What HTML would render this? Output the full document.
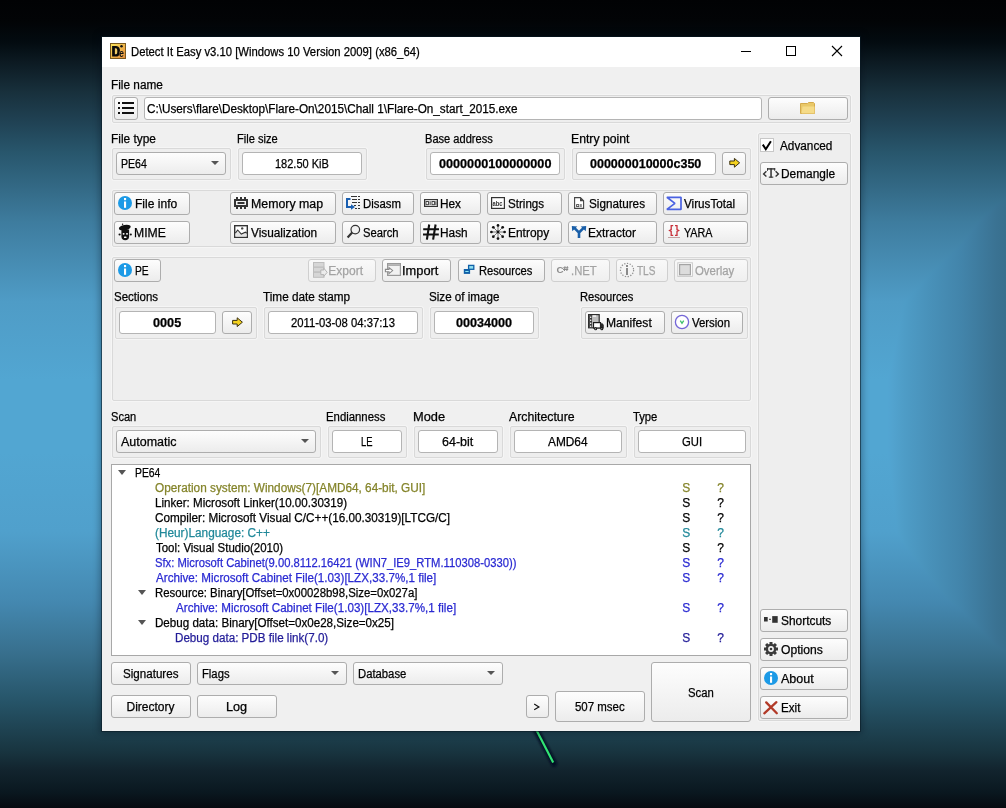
<!DOCTYPE html>
<html><head><meta charset="utf-8"><style>
*{margin:0;padding:0}
html,body{width:1006px;height:808px;overflow:hidden}
body{position:relative;font-family:"Liberation Sans",sans-serif;font-size:12px;color:#000;
background:linear-gradient(to bottom,#010204 0px,#020406 22px,#030b10 42px,#0c1a22 62px,#18303c 92px,#204254 122px,#28566c 152px,#3e7c9e 222px,#4f9cc6 302px,#52a6d2 380px,#52a6d2 452px,#50a0cc 532px,#4488b0 602px,#38708e 652px,#265468 702px,#18343f 752px,#12242e 770px,#0a1820 792px,#060a10 808px)}
.abs{position:absolute}
.t{position:absolute;white-space:pre;line-height:15px;transform-origin:0 0;-webkit-text-stroke:0.25px currentColor}
.win{position:absolute;left:102px;top:37px;width:758px;height:694px;background:#f0f0f0;box-shadow:0 0 0 1px rgba(10,25,35,0.55),0 0 7px 2px rgba(0,10,20,0.35)}
.title{position:absolute;left:102px;top:37px;width:758px;height:30px;background:#fff}
.fr{position:absolute;border:1px solid #d9d9d9;border-radius:2px;background:#eeeeee;box-shadow:0 0 0 1px #f5f5f5}
.b{position:absolute;border:1px solid #adadad;border-radius:3px;background:linear-gradient(#fdfdfd,#ececec);overflow:hidden}
.b.dis{border-color:#cfcfcf;background:linear-gradient(#f9f9f9,#efefef)}
.bt{position:absolute;white-space:pre}
.in{position:absolute;border:1px solid #b4b4b4;border-radius:3px;background:#fff}
.arr{position:absolute;width:0;height:0;border-left:4px solid transparent;border-right:4px solid transparent;border-top:4px solid #555}
.tarr{position:absolute;width:0;height:0;border-left:4px solid transparent;border-right:4px solid transparent;border-top:5px solid #555}
.ic{position:absolute}
</style></head>
<body>
<div class="abs" style="left:860px;top:0;width:146px;height:808px;mix-blend-mode:darken;background:linear-gradient(to right,#ffffff 0px,#56aad8 20px,#4e9cc6 45px,#4890b8 72px,#4284aa 102px,#3a7292 137px,#38708e 146px)"></div>
<svg class="abs" style="left:515px;top:715px" width="60" height="70" viewBox="0 0 60 70"><defs><filter id="gb" x="-50%" y="-50%" width="200%" height="200%"><feGaussianBlur stdDeviation="0.8"/></filter></defs><path d="M20.6 14L39 48.5" stroke="#050c24" stroke-width="6" stroke-linecap="round" filter="url(#gb)" opacity="0.9"/><path d="M21.4 15L38.2 47.5" stroke="#32e474" stroke-width="2.2"/></svg>
<div class="win"></div><div class="title"></div><div class="t" style="left:130.75px;top:45.30px;color:#000;transform:scaleX(0.9409);">Detect It Easy v3.10 [Windows 10 Version 2009] (x86_64)</div><div class="t" style="left:110.61px;top:78.30px;color:#000;transform:scaleX(0.9841);">File name</div><div class="fr" style="left:112px;top:95px;width:737px;height:26px"></div><div class="b" style="left:114px;top:97px;width:22px;height:21px;"></div><div class="in" style="left:144px;top:97px;width:616px;height:21px;"></div><div class="t" style="left:147.16px;top:102.30px;color:#000;transform:scaleX(0.9779);">C:\Users\flare\Desktop\Flare-On\2015\Chall 1\Flare-On_start_2015.exe</div><div class="b" style="left:768px;top:97px;width:78px;height:21px;"></div><div class="t" style="left:110.71px;top:132.30px;color:#000;transform:scaleX(0.9891);">File type</div><div class="fr" style="left:112px;top:148px;width:117px;height:30px"></div><div class="b" style="left:116px;top:152px;width:108px;height:21px;"><div class="arr" style="left:94px;top:8px"></div></div><div class="t" style="left:120.61px;top:157.30px;color:#000;transform:scaleX(0.8800);">PE64</div><div class="t" style="left:236.87px;top:132.30px;color:#000;transform:scaleX(0.9241);">File size</div><div class="fr" style="left:238px;top:148px;width:127px;height:30px"></div><div class="in" style="left:242px;top:152px;width:118px;height:21px;"></div><div class="t" style="left:274.92px;top:157.30px;color:#000;transform:scaleX(0.9177);">182.50 KiB</div><div class="t" style="left:424.57px;top:132.30px;color:#000;transform:scaleX(0.9226);">Base address</div><div class="fr" style="left:426px;top:148px;width:137px;height:30px"></div><div class="in" style="left:430px;top:152px;width:128px;height:21px;"></div><div class="t" style="left:438.83px;top:157.30px;color:#000;font-weight:bold;transform:scaleX(1.0528);">0000000100000000</div><div class="t" style="left:570.58px;top:132.30px;color:#000;transform:scaleX(1.0190);">Entry point</div><div class="fr" style="left:572px;top:148px;width:177px;height:30px"></div><div class="in" style="left:576px;top:152px;width:138px;height:21px;"></div><div class="t" style="left:590.38px;top:157.30px;color:#000;font-weight:bold;transform:scaleX(1.0424);">000000010000c350</div><div class="b" style="left:722px;top:152px;width:22px;height:21px;"></div><div class="fr" style="left:758px;top:133px;width:91px;height:586px"></div><div class="abs" style="left:760px;top:138px;width:12px;height:12px;border:1px solid #c8c8c8;background:#fff"></div><div class="t" style="left:779.80px;top:139.30px;color:#000;transform:scaleX(0.9810);">Advanced</div><div class="b" style="left:760px;top:162px;width:86px;height:21px;"></div><div class="t" style="left:781.31px;top:167.30px;color:#000;transform:scaleX(0.9902);">Demangle</div><div class="fr" style="left:112px;top:190px;width:637px;height:55px"></div><div class="b" style="left:114px;top:192px;width:74px;height:21px;"></div><div class="t" style="left:134.50px;top:197.30px;color:#000;transform:scaleX(1.0038);">File info</div><div class="b" style="left:230px;top:192px;width:104px;height:21px;"></div><div class="t" style="left:250.77px;top:197.30px;color:#000;transform:scaleX(1.0286);">Memory map</div><div class="b" style="left:342px;top:192px;width:70px;height:21px;"></div><div class="t" style="left:362.65px;top:197.30px;color:#000;transform:scaleX(0.9478);">Disasm</div><div class="b" style="left:420px;top:192px;width:59px;height:21px;"></div><div class="t" style="left:440.42px;top:197.30px;color:#000;transform:scaleX(0.9833);">Hex</div><div class="b" style="left:487px;top:192px;width:73px;height:21px;"></div><div class="t" style="left:507.92px;top:197.30px;color:#000;transform:scaleX(0.9658);">Strings</div><div class="b" style="left:568px;top:192px;width:87px;height:21px;"></div><div class="t" style="left:588.51px;top:197.30px;color:#000;transform:scaleX(0.9758);">Signatures</div><div class="b" style="left:663px;top:192px;width:83px;height:21px;"></div><div class="t" style="left:684.40px;top:197.30px;color:#000;transform:scaleX(0.9748);">VirusTotal</div><div class="b" style="left:114px;top:221px;width:74px;height:21px;"></div><div class="t" style="left:134.49px;top:226.30px;color:#000;transform:scaleX(1.0158);">MIME</div><div class="b" style="left:230px;top:221px;width:104px;height:21px;"></div><div class="t" style="left:251.00px;top:226.30px;color:#000;transform:scaleX(0.9852);">Visualization</div><div class="b" style="left:342px;top:221px;width:70px;height:21px;"></div><div class="t" style="left:363.03px;top:226.30px;color:#000;transform:scaleX(0.9334);">Search</div><div class="b" style="left:420px;top:221px;width:59px;height:21px;"></div><div class="t" style="left:440.41px;top:226.30px;color:#000;transform:scaleX(0.9871);">Hash</div><div class="b" style="left:487px;top:221px;width:73px;height:21px;"></div><div class="t" style="left:507.50px;top:226.30px;color:#000;transform:scaleX(0.9962);">Entropy</div><div class="b" style="left:568px;top:221px;width:87px;height:21px;"></div><div class="t" style="left:588.10px;top:226.30px;color:#000;transform:scaleX(0.9975);">Extractor</div><div class="b" style="left:663px;top:221px;width:83px;height:21px;"></div><div class="t" style="left:684.22px;top:226.30px;color:#000;transform:scaleX(0.8960);">YARA</div><div class="fr" style="left:112px;top:257px;width:637px;height:142px"></div><div class="b" style="left:114px;top:259px;width:45px;height:21px;"></div><div class="t" style="left:134.63px;top:264.30px;color:#000;transform:scaleX(0.8559);">PE</div><div class="b dis" style="left:308px;top:259px;width:66px;height:21px;"></div><div class="t" style="left:328.30px;top:264.30px;color:#a3a3a3;">Export</div><div class="b" style="left:382px;top:259px;width:67px;height:21px;"></div><div class="t" style="left:402.12px;top:264.30px;color:#000;transform:scaleX(1.0708);">Import</div><div class="b" style="left:458px;top:259px;width:85px;height:21px;"></div><div class="t" style="left:478.56px;top:264.30px;color:#000;transform:scaleX(0.9312);">Resources</div><div class="b dis" style="left:551px;top:259px;width:57px;height:21px;"></div><div class="t" style="left:570.86px;top:264.30px;color:#a3a3a3;transform:scaleX(0.9386);">.NET</div><div class="b dis" style="left:616px;top:259px;width:50px;height:21px;"></div><div class="t" style="left:637.33px;top:264.30px;color:#a3a3a3;transform:scaleX(0.8355);">TLS</div><div class="b dis" style="left:674px;top:259px;width:72px;height:21px;"></div><div class="t" style="left:695.23px;top:264.30px;color:#a3a3a3;transform:scaleX(0.9500);">Overlay</div><div class="t" style="left:114.02px;top:290.30px;color:#000;transform:scaleX(0.9573);">Sections</div><div class="fr" style="left:115px;top:307px;width:140px;height:30px"></div><div class="in" style="left:119px;top:311px;width:95px;height:21px;"></div><div class="t" style="left:153.33px;top:316.30px;color:#000;font-weight:bold;transform:scaleX(1.0568);">0005</div><div class="b" style="left:222px;top:311px;width:28px;height:21px;"></div><div class="t" style="left:263.40px;top:290.30px;color:#000;transform:scaleX(0.9802);">Time date stamp</div><div class="fr" style="left:264px;top:307px;width:157px;height:30px"></div><div class="in" style="left:268px;top:311px;width:148px;height:21px;"></div><div class="t" style="left:290.99px;top:316.30px;color:#000;transform:scaleX(0.9400);">2011-03-08 04:37:13</div><div class="t" style="left:428.82px;top:290.30px;color:#000;transform:scaleX(0.9689);">Size of image</div><div class="fr" style="left:430px;top:307px;width:107px;height:30px"></div><div class="in" style="left:434px;top:311px;width:98px;height:21px;"></div><div class="t" style="left:455.98px;top:316.30px;color:#000;font-weight:bold;transform:scaleX(1.0511);">00034000</div><div class="t" style="left:579.96px;top:290.30px;color:#000;transform:scaleX(0.9312);">Resources</div><div class="fr" style="left:581px;top:307px;width:165px;height:30px"></div><div class="b" style="left:585px;top:311px;width:78px;height:21px;"></div><div class="t" style="left:606.09px;top:316.30px;color:#000;transform:scaleX(1.0086);">Manifest</div><div class="b" style="left:671px;top:311px;width:70px;height:21px;"></div><div class="t" style="left:692.10px;top:316.30px;color:#000;transform:scaleX(0.9503);">Version</div><div class="t" style="left:111.14px;top:410.30px;color:#000;transform:scaleX(0.9242);">Scan</div><div class="fr" style="left:112px;top:426px;width:207px;height:30px"></div><div class="b" style="left:116px;top:430px;width:198px;height:21px;"><div class="arr" style="left:184px;top:8px"></div></div><div class="t" style="left:121.40px;top:435.30px;color:#000;transform:scaleX(1.0404);">Automatic</div><div class="t" style="left:326.35px;top:410.30px;color:#000;transform:scaleX(0.9461);">Endianness</div><div class="fr" style="left:328px;top:426px;width:77px;height:30px"></div><div class="in" style="left:332px;top:430px;width:68px;height:21px;"></div><div class="t" style="left:361.09px;top:435.30px;color:#000;transform:scaleX(0.7835);">LE</div><div class="t" style="left:412.74px;top:410.30px;color:#000;transform:scaleX(1.0683);">Mode</div><div class="fr" style="left:414px;top:426px;width:87px;height:30px"></div><div class="in" style="left:418px;top:430px;width:78px;height:21px;"></div><div class="t" style="left:442.08px;top:435.30px;color:#000;transform:scaleX(1.0414);">64-bit</div><div class="t" style="left:509.40px;top:410.30px;color:#000;transform:scaleX(1.0244);">Architecture</div><div class="fr" style="left:510px;top:426px;width:115px;height:30px"></div><div class="in" style="left:514px;top:430px;width:106px;height:21px;"></div><div class="t" style="left:548.35px;top:435.30px;color:#000;transform:scaleX(0.9889);">AMD64</div><div class="t" style="left:633.41px;top:410.30px;color:#000;transform:scaleX(0.9352);">Type</div><div class="fr" style="left:634px;top:426px;width:115px;height:30px"></div><div class="in" style="left:638px;top:430px;width:106px;height:21px;"></div><div class="t" style="left:682.19px;top:435.30px;color:#000;transform:scaleX(0.9391);">GUI</div><div class="abs" style="left:111px;top:464px;width:638px;height:190px;border:1px solid #a8a8a8;background:#fff"></div><div class="t" style="left:134.62px;top:466.30px;color:#000;transform:scaleX(0.8623);">PE64</div><div class="tarr" style="left:118px;top:470px"></div><div class="t" style="left:155.21px;top:481.30px;color:#84842a;transform:scaleX(0.9814);">Operation system: Windows(7)[AMD64, 64-bit, GUI]</div><div class="t" style="left:682.30px;top:481.30px;color:#84842a;">S</div><div class="t" style="left:717.20px;top:481.30px;color:#84842a;">?</div><div class="t" style="left:154.83px;top:496.30px;color:#000;transform:scaleX(0.9662);">Linker: Microsoft Linker(10.00.30319)</div><div class="t" style="left:682.30px;top:496.30px;color:#000;">S</div><div class="t" style="left:717.20px;top:496.30px;color:#000;">?</div><div class="t" style="left:155.11px;top:511.30px;color:#000;transform:scaleX(0.9779);">Compiler: Microsoft Visual C/C++(16.00.30319)[LTCG/C]</div><div class="t" style="left:682.30px;top:511.30px;color:#000;">S</div><div class="t" style="left:717.20px;top:511.30px;color:#000;">?</div><div class="t" style="left:155.01px;top:526.30px;color:#21899a;transform:scaleX(0.9841);">(Heur)Language: C++</div><div class="t" style="left:682.30px;top:526.30px;color:#21899a;">S</div><div class="t" style="left:717.20px;top:526.30px;color:#21899a;">?</div><div class="t" style="left:155.51px;top:541.30px;color:#000;transform:scaleX(0.9547);">Tool: Visual Studio(2010)</div><div class="t" style="left:682.30px;top:541.30px;color:#000;">S</div><div class="t" style="left:717.20px;top:541.30px;color:#000;">?</div><div class="t" style="left:155.23px;top:556.30px;color:#2a2ad2;transform:scaleX(0.9358);">Sfx: Microsoft Cabinet(9.00.8112.16421 (WIN7_IE9_RTM.110308-0330))</div><div class="t" style="left:682.30px;top:556.30px;color:#2a2ad2;">S</div><div class="t" style="left:717.20px;top:556.30px;color:#2a2ad2;">?</div><div class="t" style="left:155.70px;top:571.30px;color:#2a2ad2;transform:scaleX(0.9707);">Archive: Microsoft Cabinet File(1.03)[LZX,33.7%,1 file]</div><div class="t" style="left:682.30px;top:571.30px;color:#2a2ad2;">S</div><div class="t" style="left:717.20px;top:571.30px;color:#2a2ad2;">?</div><div class="t" style="left:154.85px;top:586.30px;color:#000;transform:scaleX(0.9487);">Resource: Binary[Offset=0x00028b98,Size=0x027a]</div><div class="tarr" style="left:138px;top:590px"></div><div class="t" style="left:175.50px;top:601.30px;color:#2a2ad2;transform:scaleX(0.9700);">Archive: Microsoft Cabinet File(1.03)[LZX,33.7%,1 file]</div><div class="t" style="left:682.30px;top:601.30px;color:#2a2ad2;">S</div><div class="t" style="left:717.20px;top:601.30px;color:#2a2ad2;">?</div><div class="t" style="left:154.83px;top:616.30px;color:#000;transform:scaleX(0.9664);">Debug data: Binary[Offset=0x0e28,Size=0x25]</div><div class="tarr" style="left:138px;top:620px"></div><div class="t" style="left:174.63px;top:631.30px;color:#221c98;transform:scaleX(0.9694);">Debug data: PDB file link(7.0)</div><div class="t" style="left:682.30px;top:631.30px;color:#221c98;">S</div><div class="t" style="left:717.20px;top:631.30px;color:#221c98;">?</div><div class="b" style="left:111px;top:662px;width:78px;height:21px;"></div><div class="t" style="left:123.02px;top:667.30px;color:#000;transform:scaleX(0.9669);">Signatures</div><div class="b" style="left:197px;top:662px;width:148px;height:21px;"><div class="arr" style="left:133px;top:8px"></div></div><div class="t" style="left:201.66px;top:667.30px;color:#000;transform:scaleX(0.9378);">Flags</div><div class="b" style="left:353px;top:662px;width:148px;height:21px;"><div class="arr" style="left:133px;top:8px"></div></div><div class="t" style="left:357.85px;top:667.30px;color:#000;transform:scaleX(0.9401);">Database</div><div class="b" style="left:111px;top:695px;width:78px;height:21px;"></div><div class="t" style="left:126.50px;top:700.30px;color:#000;">Directory</div><div class="b" style="left:197px;top:695px;width:78px;height:21px;"></div><div class="t" style="left:226.35px;top:700.30px;color:#000;transform:scaleX(1.0574);">Log</div><div class="b" style="left:526px;top:695px;width:21px;height:21px;"></div><div class="b" style="left:555px;top:691px;width:88px;height:29px;"></div><div class="t" style="left:575.02px;top:700.30px;color:#000;transform:scaleX(0.9547);">507 msec</div><div class="b" style="left:651px;top:662px;width:98px;height:58px;"></div><div class="t" style="left:687.53px;top:686.30px;color:#000;transform:scaleX(0.9433);">Scan</div><div class="b" style="left:760px;top:609px;width:86px;height:21px;"></div><div class="t" style="left:780.90px;top:614.30px;color:#000;transform:scaleX(0.9922);">Shortcuts</div><div class="b" style="left:760px;top:638px;width:86px;height:21px;"></div><div class="t" style="left:781.19px;top:643.30px;color:#000;transform:scaleX(1.0110);">Options</div><div class="b" style="left:760px;top:667px;width:86px;height:21px;"></div><div class="t" style="left:781.40px;top:672.30px;color:#000;transform:scaleX(1.0439);">About</div><div class="b" style="left:760px;top:696px;width:86px;height:21px;"></div><div class="t" style="left:780.53px;top:701.30px;color:#000;transform:scaleX(0.9701);">Exit</div><svg class="abs" style="left:0;top:0" width="1006" height="808" viewBox="0 0 1006 808"><g transform="translate(110 43)"><defs><linearGradient id="ig" x1="0" y1="0" x2="1" y2="1"><stop offset="0" stop-color="#fbe65c"/><stop offset="1" stop-color="#e4883a"/></linearGradient></defs><rect x="0.5" y="0.5" width="15" height="15" fill="url(#ig)" stroke="#7a5a20"/><path d="M2.1 3H6.2C8.8 3 10 5.2 10 8.2S8.8 13.5 6.2 13.5H2.1Z" fill="#0a0a0a"/><path d="M4.9 5.3H5.9C6.9 5.3 7.3 6.5 7.3 8.2S6.9 11.2 5.9 11.2H4.9Z" fill="#f0cc66"/><circle cx="11.5" cy="3.3" r="1.25" fill="#111"/><text x="8.9" y="13.6" font-family="Liberation Sans" font-weight="bold" font-size="10" textLength="5" lengthAdjust="spacingAndGlyphs" fill="#111" stroke="#f2b860" stroke-width="0.6" paint-order="stroke">e</text></g><rect x="741" y="51" width="10" height="1" fill="#000"/><rect x="786.5" y="46.5" width="9" height="9" fill="none" stroke="#000" stroke-width="1"/><path d="M832 46L842 56M842 46L832 56" stroke="#000" stroke-width="1.1"/><g fill="#111"><rect x="118" y="102" width="2" height="2"/><rect x="118" y="107" width="2" height="2"/><rect x="118" y="112" width="2" height="2"/><rect x="122" y="102" width="12" height="2"/><rect x="122" y="107" width="12" height="2"/><rect x="122" y="112" width="12" height="2"/></g><path d="M800.5 103.5H807.5L808.5 102.5H813.5L814.5 103.5V113.5H800.5Z" fill="#e9c868" stroke="#d4aa4c" stroke-width="1"/><path d="M802.5 106.5H814.5V113.5H801.5Z" fill="#f5db88"/><path transform="translate(729.2 157.8)" d="M0.6 3.2H5.2V0.6L10.4 5 5.2 9.4V6.8H0.6Z" fill="#f4d21f" stroke="#3a3010" stroke-width="1" stroke-linejoin="round"/><path transform="translate(232 317.2)" d="M0.6 3.2H5.2V0.6L10.4 5 5.2 9.4V6.8H0.6Z" fill="#f4d21f" stroke="#3a3010" stroke-width="1" stroke-linejoin="round"/><polyline points="762.8,144.6 765.8,149.2 770.9,141.2" fill="none" stroke="#000" stroke-width="2"/><g fill="none" stroke="#333" stroke-width="1.4"><polyline points="766.4,171.3 763.6,174 766.4,176.6"/><polyline points="775.6,171.3 778.4,174 775.6,176.6"/></g><g fill="#333"><rect x="767" y="168.2" width="8.2" height="1.4"/><rect x="767" y="168.2" width="1" height="2.6"/><rect x="774.2" y="168.2" width="1" height="2.6"/><rect x="770.3" y="168.2" width="1.5" height="9.4"/><rect x="768.8" y="176.6" width="4.5" height="1.1"/></g><circle cx="125" cy="203" r="7" fill="#1c9ae6"/><rect x="124" y="198" width="2.1" height="2.2" fill="#fff"/><rect x="124" y="201.5" width="2.1" height="6.3" fill="#fff"/><circle cx="125" cy="270" r="7" fill="#1c9ae6"/><rect x="124" y="265" width="2.1" height="2.2" fill="#fff"/><rect x="124" y="268.5" width="2.1" height="6.3" fill="#fff"/><circle cx="771" cy="678" r="7" fill="#1c9ae6"/><rect x="770" y="673" width="2.1" height="2.2" fill="#fff"/><rect x="770" y="676.5" width="2.1" height="6.3" fill="#fff"/><g fill="#333"><rect x="235" y="200" width="12" height="6" fill="none" stroke="#333" stroke-width="2"/><rect x="237.5" y="202" width="7" height="2"/><rect x="236" y="197" width="2" height="2"/><rect x="240" y="197" width="2" height="2"/><rect x="244" y="197" width="2" height="2"/><rect x="236" y="207" width="2" height="2"/><rect x="240" y="207" width="2" height="2"/><rect x="244" y="207" width="2" height="2"/></g><rect x="234.7" y="225.7" width="12.6" height="11.6" fill="#fff" stroke="#333" stroke-width="1.4"/><path d="M235.5 233L237.7 230 241.3 234 245.4 232.2 246.6 233V236.6H235.5Z" fill="#e4e4e4"/><polyline points="235.3,233.2 237.7,230 241.3,234.1 245.4,232.2 246.8,233.2" fill="none" stroke="#333" stroke-width="1.1"/><circle cx="242.2" cy="228.4" r="1.2" fill="#444"/><path d="M350.5 199H347V207H352" fill="none" stroke="#1a5fb0" stroke-width="2"/><path d="M351 204.2L355 207 351 209.8Z" fill="#1a5fb0"/><g fill="#333"><rect x="351" y="196" width="6" height="1"/><rect x="358" y="196" width="2" height="1"/><rect x="352" y="199" width="5" height="1"/><rect x="358" y="199" width="2" height="1"/><rect x="352" y="202" width="5" height="1"/><rect x="358" y="202" width="2" height="1"/><rect x="354" y="205" width="2" height="1"/><rect x="358" y="205" width="2" height="1"/><rect x="355" y="208" width="2" height="1"/><rect x="358" y="208" width="2" height="1"/></g><circle cx="355.3" cy="229.6" r="4.3" fill="#f2f2f2" stroke="#333" stroke-width="1.2"/><path d="M352.2 232.6L347.6 237.4" stroke="#333" stroke-width="2.2"/><rect x="424.6" y="199.6" width="12.8" height="6.8" fill="#fff" stroke="#333" stroke-width="1.2"/><g fill="#333"><rect x="426" y="201.5" width="2.4" height="3.2" fill="none" stroke="#333" stroke-width="0.9"/><rect x="429.6" y="201.2" width="1" height="3.8"/><rect x="432" y="201.5" width="2.4" height="3.2" fill="none" stroke="#333" stroke-width="0.9"/><rect x="435.4" y="201.2" width="1" height="3.8"/></g><path d="M429.2 224.5L426.9 239.6M435.6 224.5L433.1 239.6M423.2 229.3H439M423 234.5H438.8" stroke="#111" stroke-width="2.1"/><rect x="491.6" y="197.6" width="12.8" height="10.8" fill="#fff" stroke="#333" stroke-width="1.2"/><text x="492.6" y="205.6" font-family="Liberation Sans" font-weight="bold" font-size="7.2" textLength="10" lengthAdjust="spacingAndGlyphs" fill="#333">abc</text><g><line x1="498" y1="232" x2="504.60" y2="232.00" stroke="#777" stroke-width="1"/><circle cx="504.60" cy="232.00" r="1.35" fill="#111"/><line x1="498" y1="232" x2="502.67" y2="236.67" stroke="#777" stroke-width="1"/><circle cx="502.67" cy="236.67" r="1.35" fill="#111"/><line x1="498" y1="232" x2="498.00" y2="238.60" stroke="#777" stroke-width="1"/><circle cx="498.00" cy="238.60" r="1.35" fill="#111"/><line x1="498" y1="232" x2="493.33" y2="236.67" stroke="#777" stroke-width="1"/><circle cx="493.33" cy="236.67" r="1.35" fill="#111"/><line x1="498" y1="232" x2="491.40" y2="232.00" stroke="#777" stroke-width="1"/><circle cx="491.40" cy="232.00" r="1.35" fill="#111"/><line x1="498" y1="232" x2="493.33" y2="227.33" stroke="#777" stroke-width="1"/><circle cx="493.33" cy="227.33" r="1.35" fill="#111"/><line x1="498" y1="232" x2="498.00" y2="225.40" stroke="#777" stroke-width="1"/><circle cx="498.00" cy="225.40" r="1.35" fill="#111"/><line x1="498" y1="232" x2="502.67" y2="227.33" stroke="#777" stroke-width="1"/><circle cx="502.67" cy="227.33" r="1.35" fill="#111"/><circle cx="498" cy="232" r="1.4" fill="#111"/></g><path d="M574.6 197.6H580.4L583.6 200.8V208.4H574.6Z" fill="#fff" stroke="#444" stroke-width="1.1"/><path d="M580 197.4L583.9 201.3H580Z" fill="#444"/><rect x="576.6" y="204.6" width="2.2" height="2" fill="none" stroke="#444" stroke-width="0.9"/><rect x="580.4" y="204" width="1.1" height="3" fill="#444"/><path d="M579 238V232.5L574.3 227.8M579 232.5L583.7 227.8" fill="none" stroke="#1a5fa8" stroke-width="2.6"/><path d="M571.8 226L577.3 226.4 572.2 231.3Z" fill="#1a5fa8"/><path d="M586.2 226L580.7 226.4 585.8 231.3Z" fill="#1a5fa8"/><path d="M666.9 197.3H681V209.4H666.9L674.9 203.35Z" fill="none" stroke="#4a62e2" stroke-width="1.7" stroke-linejoin="bevel"/><g fill="none" stroke="#c8303a" stroke-width="1.3"><path d="M673.2 225.6H671.2V229.6L669.6 230.5 671.2 231.4V235.4H673.2"/><path d="M675 225.6H677V229.6L678.6 230.5 677 231.4V235.4H675"/></g><rect x="668" y="237.2" width="12" height="0.7" fill="#b08080"/><g fill="#111"><ellipse cx="124.8" cy="227.6" rx="6" ry="2.6" transform="rotate(-10 124.8 227.6)"/><circle cx="122.6" cy="224.3" r="0.7"/><path d="M121.4 229.5H129.1V236.5C129.1 239 127.5 240.2 125.25 240.2S121.4 239 121.4 236.5Z"/><circle cx="119.6" cy="234.5" r="1.1"/><circle cx="130.8" cy="234.5" r="1.1"/></g><g fill="#fff"><ellipse cx="123.6" cy="233.8" rx="1" ry="0.9"/><ellipse cx="127" cy="233.8" rx="1" ry="0.9"/><rect x="124" y="236.6" width="2.5" height="1.3" rx="0.5"/></g><g fill="#d6d6d6" stroke="#bdbdbd" stroke-width="1"><rect x="313.5" y="262.5" width="10.5" height="4.6"/><rect x="313.5" y="267.3" width="10.5" height="4.6"/><rect x="313.5" y="272.3" width="10.5" height="5"/></g><path d="M320.8 270H323.8V268.2L327.2 272.3 323.8 276.4V274.6H320.8Z" fill="#ececec" stroke="#b4b4b4" stroke-width="1"/><rect x="387.6" y="263.6" width="12.8" height="11.8" fill="#f2f2f2" stroke="#9a9a9a" stroke-width="1.2"/><rect x="388" y="264.2" width="12" height="1.8" fill="#b0b0b0"/><path d="M385.4 269.4H389V267.6L392.6 270.6 389 273.6V271.8H385.4Z" fill="#fff" stroke="#8a8a8a" stroke-width="1.1"/><rect x="468.6" y="265.4" width="5.2" height="3.9" fill="#90e0f0" stroke="#1060a8" stroke-width="1.3"/><rect x="463.8" y="269" width="6.3" height="4.9" fill="#1060a8"/><rect x="465.3" y="271" width="3.3" height="1" fill="#90e8f8"/><text x="556.4" y="273.2" font-family="Liberation Sans" font-weight="bold" font-size="9.8" fill="#8c8c8c">C</text><path d="M565 266.2L564.4 271M567.4 266.2L566.8 271M563.2 267.7H568.4M563 269.5H568.2" stroke="#8c8c8c" stroke-width="1.05"/><circle cx="627" cy="270" r="6.6" fill="none" stroke="#909090" stroke-width="1.2" stroke-dasharray="1.3 1.5"/><rect x="626" y="265" width="2" height="2" fill="#8a8a8a"/><rect x="626" y="268" width="2" height="7" fill="#8a8a8a"/><rect x="677.8" y="262.8" width="14.6" height="13.6" fill="#fff" stroke="#cacaca" stroke-width="1"/><rect x="679.6" y="264.6" width="10.8" height="10.2" fill="#dcdcdc" stroke="#a4a4a4" stroke-width="1.2"/><rect x="588.6" y="314.6" width="10.6" height="13.2" fill="#bdbdbd" stroke="#2e2e2e" stroke-width="1.2"/><rect x="589.2" y="315.2" width="2.8" height="12" fill="#3a3a3a"/><g fill="#fff"><rect x="590" y="316.6" width="1.3" height="1.3"/><rect x="590" y="319.6" width="1.3" height="1.3"/><rect x="590" y="322.6" width="1.3" height="1.3"/><rect x="590" y="325.6" width="1.3" height="1.3"/><rect x="592.8" y="315.4" width="3.4" height="1.3"/></g><rect x="593.5" y="322.6" width="7" height="5.4" fill="#fff" stroke="#1e1e1e" stroke-width="1.2"/><path d="M600.4 323.2H602.4L603.8 325V328.6H600.4Z" fill="#2a2a2a"/><circle cx="595.6" cy="328.7" r="1.5" fill="#111"/><circle cx="601.8" cy="328.7" r="1.5" fill="#111"/><circle cx="595.6" cy="328.7" r="0.5" fill="#fff"/><circle cx="601.8" cy="328.7" r="0.5" fill="#fff"/><circle cx="682" cy="322" r="6.6" fill="#fff" stroke="#7466d8" stroke-width="1.3"/><path d="M680.3 320.6L682 323.3 683.7 320.6" fill="none" stroke="#3cbf6a" stroke-width="1.3"/><g fill="#333"><rect x="764" y="617" width="3.7" height="4.5"/><rect x="769" y="618.8" width="2" height="1"/><rect x="772.2" y="616.1" width="5.5" height="6.7"/></g><g transform="translate(771 649)" fill="#3a3a3a"><rect x="-1.5" y="-7" width="3" height="14"/><rect x="-1.5" y="-7" width="3" height="14" transform="rotate(45)"/><rect x="-1.5" y="-7" width="3" height="14" transform="rotate(90)"/><rect x="-1.5" y="-7" width="3" height="14" transform="rotate(135)"/><circle r="5.3"/><circle r="2.9" fill="#f4f4f4"/><circle r="1.3"/></g><path d="M764.3 713.3L776.4 702.2M766.2 702.4L776.8 713.3" stroke="#b23a28" stroke-width="2.3" stroke-linecap="round"/><polyline points="534.2,704.1 538.9,706.9 534.2,709.7" fill="none" stroke="#111" stroke-width="1.15"/></svg>
</body></html>
